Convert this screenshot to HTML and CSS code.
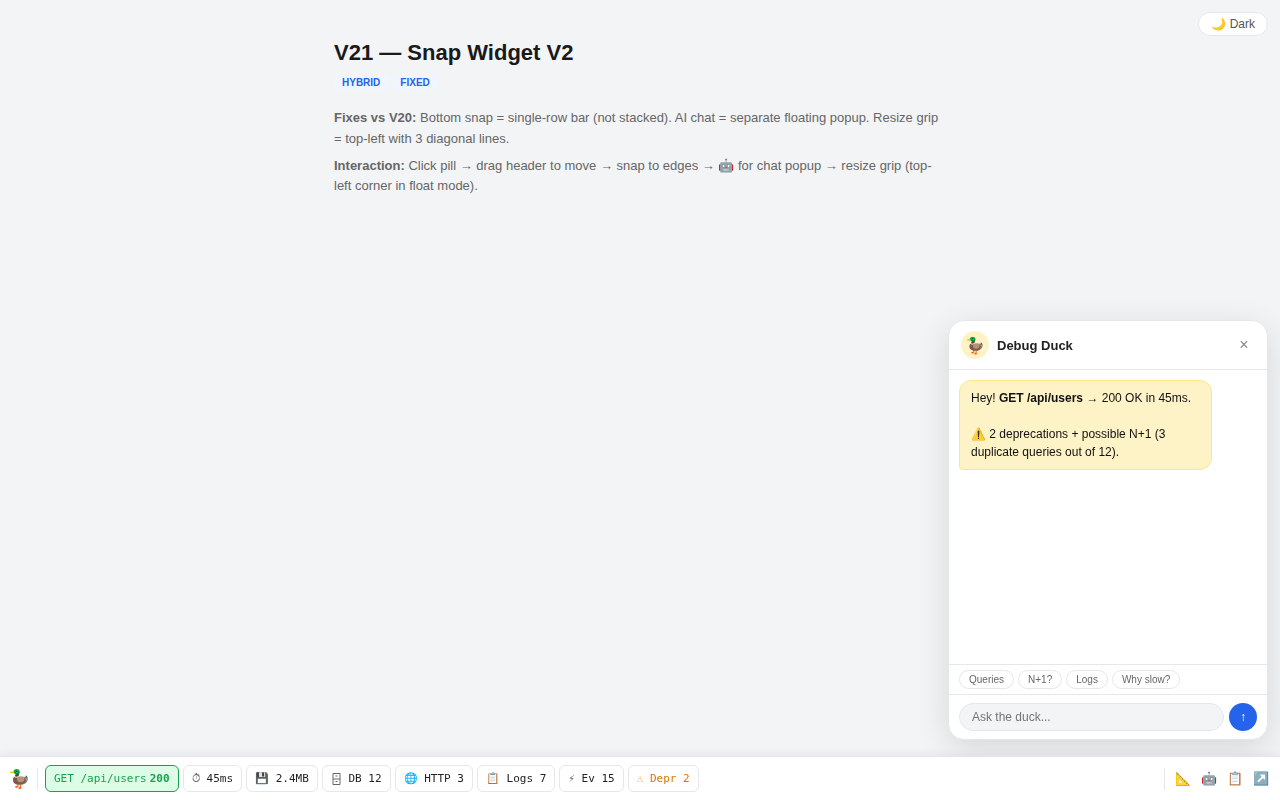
FILE: index.html

```html
<!DOCTYPE html>
<html lang="en">
<head>
  <meta charset="UTF-8">
  <title>V21 — Snap Widget V2</title>
  <link rel="stylesheet" href="styles.css">
</head>
<body>
  <button class="theme-btn">🌙 Dark</button>

  <div class="page">
    <h1>V21 — Snap Widget V2</h1>
    <div class="tags">
      <span class="tag">HYBRID</span>
      <span class="tag">FIXED</span>
    </div>
    <p><strong>Fixes vs V20:</strong> Bottom snap = single-row bar (not stacked). AI chat = separate floating popup. Resize grip = top-left with 3 diagonal lines.</p>
    <p><strong>Interaction:</strong> Click pill → drag header to move → snap to edges → 🤖 for chat popup → resize grip (top-left corner in float mode).</p>
  </div>

  <div class="chat">
    <div class="chat-head">
      <div class="chat-avatar">🦆</div>
      <div class="chat-name">Debug Duck</div>
      <div class="chat-close">×</div>
    </div>
    <div class="chat-body">
      <div class="bubble">Hey! <strong>GET /api/users</strong> → 200 OK in 45ms.<br><br>⚠️ 2 deprecations + possible N+1 (3 duplicate queries out of 12).</div>
    </div>
    <div class="chips">
      <span class="chip">Queries</span>
      <span class="chip">N+1?</span>
      <span class="chip">Logs</span>
      <span class="chip">Why slow?</span>
    </div>
    <div class="chat-input">
      <input type="text" placeholder="Ask the duck...">
      <button class="send">↑</button>
    </div>
  </div>

  <div class="bar">
    <div class="bar-duck">🦆</div>
    <div class="divider"></div>
    <div class="pill pill-req">GET /api/users<b>200</b></div>
    <div class="pill"><span class="ico ico-clock">⏱</span> 45ms</div>
    <div class="pill">💾 2.4MB</div>
    <div class="pill">
      <svg class="ico-db" viewBox="0 0 11 12" width="11" height="12"><path d="M2 .5h7v11H2zM2 6h7M4.500 3h2M4.500 8.500h2" fill="none" stroke="#666"/></svg><span> DB 12</span>
    </div>
    <div class="pill">🌐 HTTP 3</div>
    <div class="pill">📋 Logs 7</div>
    <div class="pill"><span class="ico">⚡</span> Ev 15</div>
    <div class="pill pill-warn"><span class="ico-warn">⚠</span> Depr 2</div>
    <div class="bar-right">
      <div class="divider"></div>
      <span class="tool">📐</span>
      <span class="tool">🤖</span>
      <span class="tool">📋</span>
      <span class="tool">↗️</span>
    </div>
  </div>
</body>
</html>
```

FILE: styles.css

```css
html, body {
  margin: 0;
  padding: 0;
  height: 100%;
  overflow: hidden;
  background: #f3f4f6;
  font-family: "Liberation Sans", Arial, sans-serif;
  color: #111;
}
.page {
  width: 612px;
  margin: 0 auto;
  padding-top: 39px;
}
h1 {
  margin: 0 0 9px;
  font-size: 22px;
  line-height: 27px;
  font-weight: 700;
  color: #1a1a1a;
}
.tags {
  display: flex;
  gap: 4px;
  margin-bottom: 18px;
}
.tag {
  padding: 0 8px;
  height: 15px;
  line-height: 15px;
  font-size: 10px;
  font-weight: 700;
  color: #2563eb;
  background: #eff6ff;
  border-radius: 4px;
}
p {
  margin: 0 0 6px;
  font-size: 13px;
  line-height: 1.6;
  color: #666;
}
.theme-btn {
  position: fixed;
  top: 12px;
  right: 12px;
  height: 24px;
  padding: 0 12px;
  font-family: inherit;
  font-size: 12px;
  color: #555;
  background: #fff;
  border: 1px solid #e5e7eb;
  border-radius: 999px;
}

/* chat popup */
.chat {
  position: fixed;
  right: 12px;
  bottom: 60px;
  width: 320px;
  height: 420px;
  box-sizing: border-box;
  display: flex;
  flex-direction: column;
  background: #fff;
  border: 1px solid #e5e7eb;
  border-radius: 16px;
  box-shadow: 0 8px 32px rgba(0,0,0,0.12);
  overflow: hidden;
}
.chat-head {
  display: flex;
  align-items: center;
  gap: 8px;
  height: 48px;
  padding: 0 12px;
  border-bottom: 1px solid #e5e7eb;
  flex-shrink: 0;
}
.chat-avatar {
  width: 28px;
  height: 28px;
  display: flex;
  align-items: center;
  justify-content: center;
  font-size: 16px;
  background: #fef3c7;
  border-radius: 50%;
}
.chat-name {
  flex: 1;
  font-size: 13px;
  font-weight: 700;
  color: #222;
}
.chat-close {
  width: 22px;
  text-align: center;
  font-size: 16px;
  color: #888;
}
.chat-body {
  flex: 1;
  padding: 10px;
}
.bubble {
  box-sizing: border-box;
  max-width: 85%;
  padding: 8px 11px;
  font-size: 12px;
  line-height: 18px;
  color: #111;
  background: #fef3c7;
  border: 1px solid #fde68a;
  border-radius: 12px 12px 12px 4px;
}
.chips {
  display: flex;
  gap: 4px;
  padding: 5px 10px;
  border-top: 1px solid #e5e7eb;
}
.chip {
  height: 17px;
  line-height: 17px;
  padding: 0 9px;
  font-size: 10px;
  color: #666;
  border: 1px solid #e5e7eb;
  border-radius: 999px;
}
.chat-input {
  display: flex;
  align-items: center;
  gap: 5px;
  padding: 8px 10px;
  border-top: 1px solid #e5e7eb;
}
.chat-input input {
  flex: 1;
  min-width: 0;
  box-sizing: border-box;
  height: 28px;
  padding: 0 12px;
  font-family: inherit;
  font-size: 12px;
  background: #f3f4f6;
  border: 1px solid #e5e7eb;
  border-radius: 999px;
}
.send {
  width: 28px;
  height: 28px;
  padding: 0;
  font-size: 12px;
  color: #fff;
  background: #2563eb;
  border: 0;
  border-radius: 50%;
}

/* bottom bar */
.bar {
  position: fixed;
  left: 0;
  right: 0;
  bottom: 0;
  height: 44px;
  box-sizing: border-box;
  display: flex;
  align-items: center;
  gap: 4px;
  padding: 0 11px 0 8px;
  background: #fff;
  border-top: 1px solid #e5e7eb;
  box-shadow: 0 -2px 8px rgba(0,0,0,0.06);
}
.bar-duck {
  width: 20px;
  font-size: 18px;
  line-height: 24px;
  text-align: center;
}
.divider {
  width: 1px;
  height: 22px;
  background: #e5e7eb;
  margin: 0 3px 0 5px;
}
.bar-right .divider {
  margin-right: 0;
}
.pill {
  display: flex;
  align-items: center;
  height: 27px;
  box-sizing: border-box;
  padding: 0 8px;
  font-family: monospace;
  font-size: 11px;
  white-space: pre;
  color: #222;
  border: 1px solid #e5e7eb;
  border-radius: 6px;
}
.pill b {
  margin-left: 3px;
}
.ico {
  color: #666;
}
.ico-clock {
  margin-right: -0.6px;
}
.ico-warn {
  opacity: 0.6;
}
.ico-db {
  flex-shrink: 0;
}
.pill-req {
  color: #16a34a;
  background: #dcfce7;
  border-color: #16a34a;
}
.pill-warn {
  color: #d97706;
}
.bar-right {
  margin-left: auto;
  display: flex;
  align-items: center;
  gap: 10px;
}
.tool {
  width: 16px;
  font-size: 13px;
  text-align: center;
}
```
